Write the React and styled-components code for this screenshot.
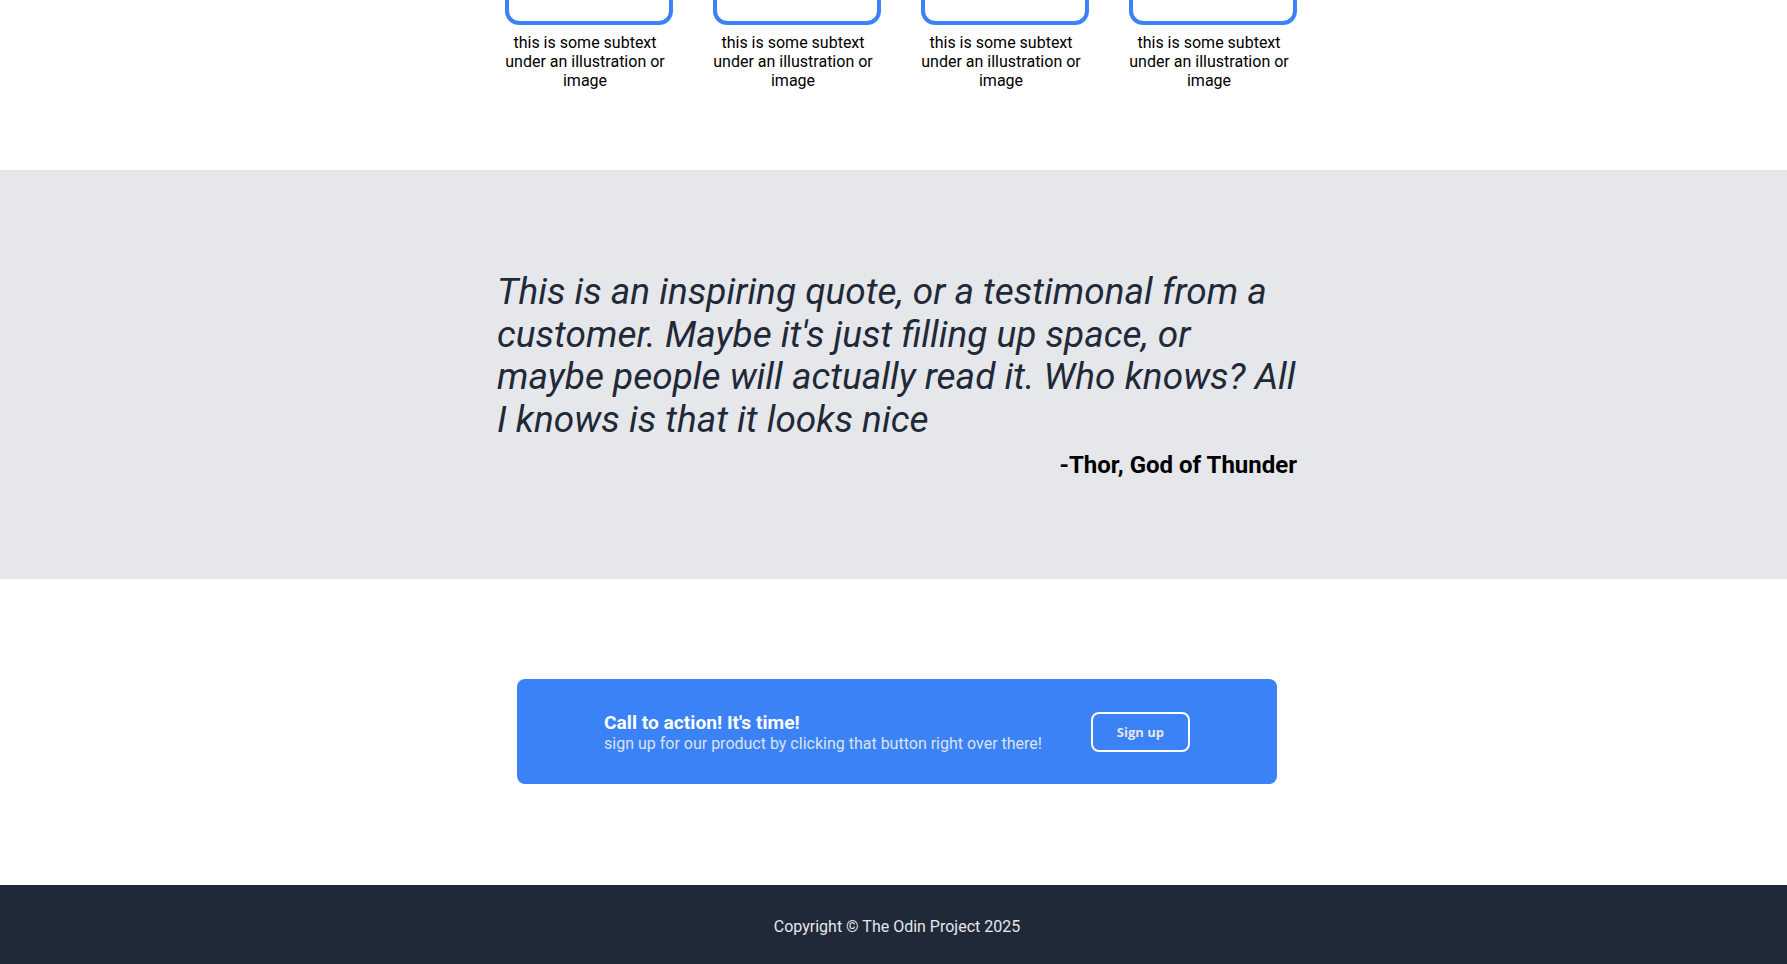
import styled, { createGlobalStyle } from "styled-components";

const GlobalStyle = createGlobalStyle`
  html, body {
    margin: 0;
    padding: 0;
    background: #ffffff;
  }
  body {
    font-family: Roboto, "Liberation Sans", Arial, sans-serif;
    color: #000;
  }
`;

const items = [1, 2, 3, 4];

export default function App() {
  return (
    <>
      <GlobalStyle />
      <Features>
        <Row>
          {items.map((i) => (
            <Item key={i}>
              <Frame />
              <Caption>this is some subtext under an illustration or image</Caption>
            </Item>
          ))}
        </Row>
      </Features>

      <QuoteBand>
        <QuoteBox>
          <Quote>
            This is an inspiring quote, or a testimonal from a customer. Maybe it's just
            filling up space, or maybe people will actually read it. Who knows? All I
            knows is that it looks nice
          </Quote>
          <Author>-Thor, God of Thunder</Author>
        </QuoteBox>
      </QuoteBand>

      <CtaSection>
        <CtaCard>
          <CtaText>
            <CtaTitle>Call to action! It's time!</CtaTitle>
            <CtaSub>sign up for our product by clicking that button right over there!</CtaSub>
          </CtaText>
          <SignUp>Sign up</SignUp>
        </CtaCard>
      </CtaSection>

      <Footer>Copyright © The Odin Project 2025</Footer>
    </>
  );
}

const Features = styled.section`
  padding: 0 0 80px 7px;
`;

const Row = styled.div`
  display: flex;
  justify-content: center;
  gap: 48px;
`;

const Item = styled.div`
  width: 160px;
  display: flex;
  flex-direction: column;
  align-items: flex-start;
`;

const Frame = styled.div`
  width: 160px;
  height: 21px;
  border: 4px solid #3b82f6;
  border-top: none;
  border-radius: 0 0 14px 14px;
`;

const Caption = styled.p`
  margin: 8px 0 0;
  width: 160px;
  font-size: 16px;
  text-align: center;
  color: #000;
`;

const QuoteBand = styled.section`
  background: #e5e7eb;
  padding: 101px 0 100px 7px;
`;

const QuoteBox = styled.div`
  width: 800px;
  margin: 0 auto;
  display: flex;
  flex-direction: column;
  gap: 10px;
`;

const Quote = styled.p`
  margin: 0;
  font-size: 37px;
  line-height: 42.6px;
  font-style: italic;
  font-weight: 400;
  color: #1f2937;
`;

const Author = styled.p`
  margin: 0;
  align-self: flex-end;
  font-size: 24px;
  font-weight: 700;
  color: #000;
`;

const CtaSection = styled.section`
  padding: 100px 0 101px 7px;
`;

const CtaCard = styled.div`
  width: 760px;
  height: 105px;
  box-sizing: border-box;
  margin: 0 auto;
  padding: 0 87px;
  background: #3b82f6;
  border-radius: 8px;
  display: flex;
  align-items: center;
  justify-content: space-between;
`;

const CtaText = styled.div`
  display: flex;
  flex-direction: column;
`;

const CtaTitle = styled.span`
  font-size: 19.2px;
  font-weight: 700;
  color: #fff;
`;

const CtaSub = styled.span`
  font-size: 16px;
  color: #dbe3ef;
`;

const SignUp = styled.button`
  height: 40px;
  padding: 0 24px;
  border: 2px solid #fff;
  border-radius: 8px;
  background: transparent;
  color: #e5e7eb;
  font-family: "Open Sans", sans-serif;
  font-size: 13px;
  font-weight: 700;
  cursor: pointer;
`;

const Footer = styled.footer`
  background: #1f2937;
  color: #e5e7eb;
  font-size: 16px;
  text-align: center;
  padding: 32px 0 32px 7px;
`;
